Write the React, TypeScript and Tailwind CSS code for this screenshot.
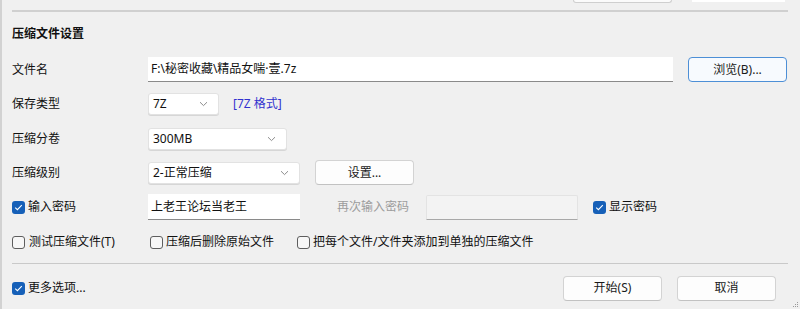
import React from "react";

const font = { fontFamily: '"Noto Sans", "Noto Sans CJK SC", sans-serif' };

function Chevron() {
  return (
    <svg width="9" height="6" viewBox="0 0 9 6" className="shrink-0">
      <path d="M1 1.2 L4.5 4.6 L8 1.2" fill="none" stroke="#8c8c8c" strokeWidth="1" />
    </svg>
  );
}

function Check({ on }: { on: boolean }) {
  if (on) {
    return (
      <span className="flex h-[13px] w-[13px] shrink-0 items-center justify-center rounded-[3px] bg-[#1660b8]">
        <svg width="9" height="7" viewBox="0 0 9 7">
          <path d="M1.2 3.6 L3.4 5.7 L7.8 1.2" fill="none" stroke="#fff" strokeWidth="1.1" />
        </svg>
      </span>
    );
  }
  return <span className="h-[13px] w-[13px] shrink-0 rounded-[3px] border border-[#5e5e5e] bg-[#f7f7f7]" />;
}

function Select({ value, width }: { value: string; width: string }) {
  return (
    <div
      className={`flex h-[22px] ${width} items-center justify-between rounded-[3px] border border-[#e2e2e2] bg-white pl-[4px] pr-[10px] text-[12px] text-[#111] shadow-[0_1px_0_#d6d6d6]`}
    >
      <span>{value}</span>
      <Chevron />
    </div>
  );
}

function Button({ label, className = "" }: { label: string; className?: string }) {
  return (
    <div
      className={`flex items-center justify-center rounded-[4px] border border-[#d3d3d3] border-b-[#c2c2c2] bg-[#fdfdfd] text-[12px] text-[#1a1a1a] ${className}`}
    >
      {label}
    </div>
  );
}

function Row({ label, className, children }: { label?: React.ReactNode; className: string; children?: React.ReactNode }) {
  return (
    <div className={`flex items-center ${className}`}>
      <div className="flex w-[136px] shrink-0 items-center">{label}</div>
      {children}
    </div>
  );
}

export default function App() {
  return (
    <div
      className="relative h-[309px] w-[800px] overflow-hidden border-l-[2px] border-[#d2d2d2] bg-[#f0f0f0] text-[12px] leading-none text-[#111]"
      style={font}
    >
      {/* bottoms of buttons cut off above */}
      <div className="flex h-[3px]">
        <div className="ml-[571px] h-[3px] w-[99px] rounded-b-[4px] border border-t-0 border-[#cfcfcf] bg-[#fbfbfb]" />
        <div className="ml-[20px] h-[2px] w-[93px] bg-white" />
      </div>

      <div className="ml-[10px] mt-[7px] h-[2px] w-[776px] bg-[#d0d0d0]" />

      <div className="ml-[10px] mt-[12px] flex h-[20px] items-center text-[12px] font-bold text-[#111]">
        压缩文件设置
      </div>

      <div className="px-[10px]">
        <Row label="文件名" className="mt-[13px] h-[25px]">
          <div className="flex h-[25px] w-[525px] items-center border-b border-[#8a8a8a] bg-white pl-[3px] text-[12px] text-[#111]">
            F:\秘密收藏\精品女喘·壹.7z
          </div>
          <div className="ml-[15px] flex h-[25px] w-[99px] items-center justify-center rounded-[4px] border border-[#4d8fd6] bg-[#f7fafe] text-[12px] text-[#1a1a1a]">
            浏览(B)...
          </div>
        </Row>

        <Row label="保存类型" className="mt-[11px] h-[22px]">
          <Select value="7Z" width="w-[71px]" />
          <span className="ml-[14px] text-[12px] text-[#3232cf]">[7Z 格式]</span>
        </Row>

        <Row label="压缩分卷" className="mt-[13px] h-[22px]">
          <Select value="300MB" width="w-[139px]" />
        </Row>

        <Row label="压缩级别" className="mt-[10px] h-[25px]">
          <Select value="2-正常压缩" width="w-[152px]" />
          <Button label="设置..." className="ml-[15px] h-[25px] w-[99px]" />
        </Row>

        <Row
          label={
            <>
              <Check on />
              <span className="ml-[3px]">输入密码</span>
            </>
          }
          className="mt-[9px] h-[26px]"
        >
          <div className="flex h-[26px] w-[152px] items-center border-b border-[#8a8a8a] bg-white pl-[3px] text-[12px] text-[#111]">
            上老王论坛当老王
          </div>
          <span className="ml-[37px] w-[89px] text-[12px] text-[#9c9c9c]">再次输入密码</span>
          <div className="h-[25px] w-[152px] rounded-t-[2px] border border-[#e3e3e3] border-b-[#a8a8a8] bg-[#f3f3f3]" />
          <span className="ml-[15px] flex items-center">
            <Check on />
            <span className="ml-[3px]">显示密码</span>
          </span>
        </Row>

        <div className="mt-[13px] flex h-[18px] items-center">
          <Check on={false} />
          <span className="ml-[4px] w-[121px]">测试压缩文件(T)</span>
          <Check on={false} />
          <span className="ml-[3px] w-[131px]">压缩后删除原始文件</span>
          <Check on={false} />
          <span className="ml-[3px]">把每个文件/文件夹添加到单独的压缩文件</span>
        </div>

        <div className="mt-[12px] h-px w-[776px] bg-[#c9c9c9]" />

        <div className="mt-[12px] flex h-[24px] items-center">
          <Check on />
          <span className="ml-[3px]">更多选项...</span>
          <Button label="开始(S)" className="ml-auto h-[25px] w-[99px]" />
          <Button label="取消" className="ml-[15px] mr-[14px] h-[25px] w-[99px]" />
        </div>
      </div>

      <div className="absolute bottom-[2px] right-[2px] grid grid-cols-3 gap-[1px]">
        {[0, 0, 1, 0, 1, 1, 1, 1, 1].map((v, i) => (
          <span key={i} className={`h-[1px] w-[1px] ${v ? "bg-[#9a9a9a]" : "bg-transparent"}`} />
        ))}
      </div>
    </div>
  );
}
